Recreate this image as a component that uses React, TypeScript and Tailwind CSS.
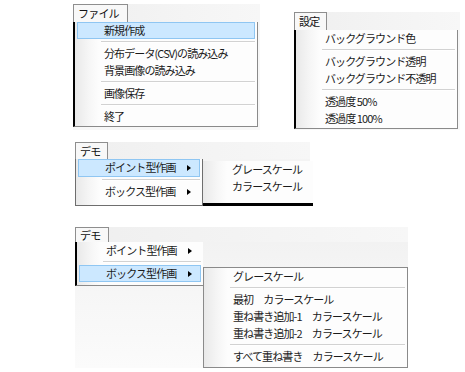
import type { ReactNode } from "react"

const font = { fontFamily: '"Noto Sans CJK JP", "Noto Sans", sans-serif' }

type Entry = { label?: string; sep?: boolean; hot?: boolean; arrow?: boolean }

function Item({ e, h }: { e: Entry; h: string }) {
  if (e.sep) {
    return (
      <div className="h-[6px] flex items-center pl-[26px] pr-[2px]">
        <div className="w-full border-t border-[#d2d2d2] border-b border-b-white" />
      </div>
    )
  }
  return (
    <div className={`${h} px-[2px]`}>
      <div
        className={`h-full flex items-center justify-between pl-[26px] pr-[8px] border ${
          e.hot ? "bg-[#cce8ff] border-[#8fc6f2]" : "border-transparent"
        }`}
      >
        <span className="whitespace-pre text-[11px] tracking-[-0.9px] text-[#1b1b1b] leading-none pb-[1px]">{e.label}</span>
        {e.arrow && <span className="w-0 h-0 border-y-[3.5px] border-y-transparent border-l-[4px] border-l-black" />}
      </div>
    </div>
  )
}

function Menu({ items, cls, h = "h-[17px]" }: { items: Entry[]; cls: string; h?: string }) {
  return (
    <div
      className={`flex flex-col shrink-0 bg-[linear-gradient(to_right,#e9e9e9_0px,#f6f6f6_14px,#fdfdfd_24px,#fdfdfd_100%)] ${cls}`}
    >
      {items.map((e, i) => (
        <Item key={i} e={e} h={h} />
      ))}
    </div>
  )
}

function Bar({ title, tabW, h, children }: { title: string; tabW: string; h: string; children?: ReactNode }) {
  return (
    <div className={`flex ${h} bg-[linear-gradient(to_right,#efefef,#f4f4f4_60%,#f7f7f7)]`}>
      <div
        className={`${tabW} border border-b-0 border-[#8e8e8e] bg-[#f8f8f8] flex items-center pl-[4px] text-[11px] tracking-[-0.8px] text-[#111] leading-none`}
      >
        {title}
      </div>
      {children}
    </div>
  )
}

export default function App() {
  return (
    <div className="w-[465px] h-[372px] bg-white overflow-hidden" style={font}>
      {/* top row: ファイル + 設定 */}
      <div className="flex pt-[4px] pl-[73px]">
        <div className="w-[187px] h-[126px] flex flex-col">
          <Bar title="ファイル" tabW="w-[55px]" h="h-[18px]" />
          <div className="flex flex-1 bg-[#f7f7f7]">
            <Menu
              cls="w-[185px] h-[105px] border-l-2 border-l-black border-r border-b border-[#8a8a8a]"
              items={[
                { label: "新規作成", hot: true },
                { sep: true },
                { label: "分布データ(CSV)の読み込み" },
                { label: "背景画像の読み込み" },
                { sep: true },
                { label: "画像保存" },
                { sep: true },
                { label: "終了" },
              ]}
            />
          </div>
        </div>

        <div className="ml-[34px] mt-[8px] w-[166px] h-[118px] flex flex-col">
          <Bar title="設定" tabW="w-[33px]" h="h-[18px]" />
          <div className="flex flex-1 bg-[#f7f7f7]">
            <Menu
              cls="w-[164px] h-[99px] border-l-2 border-l-black border-r border-b border-[#8a8a8a]"
              items={[
                { label: "バックグラウンド色" },
                { sep: true },
                { label: "バックグラウンド透明" },
                { label: "バックグラウンド不透明" },
                { sep: true },
                { label: "透過度 50%" },
                { label: "透過度 100%" },
              ]}
            />
          </div>
        </div>
      </div>

      {/* デモ: ポイント型作画 */}
      <div className="pl-[75px] mt-[12px]">
        <div className="w-[235px] h-[64px] flex flex-col">
          <Bar title="デモ" tabW="w-[33px]" h="h-[17px]" />
          <div className="flex flex-1 bg-[#f4f4f4]">
            <Menu
              cls="w-[128px] h-[47px] border-l border-[#6e6e6e] border-b border-r"
              h="h-[18px]"
              items={[
                { label: "ポイント型作画", hot: true, arrow: true },
                { sep: true },
                { label: "ボックス型作画", arrow: true },
              ]}
            />
            <div className="flex-1 mt-[2px] h-[45px] border-b-[3px] border-b-black">
              <Menu
                cls="h-full"
                items={[{ label: "グレースケール" }, { label: "カラースケール" }]}
              />
            </div>
          </div>
        </div>
      </div>

      {/* デモ: ボックス型作画 */}
      <div className="pl-[75px] mt-[21px]">
        <div className="w-[333px] h-[141px] flex flex-col">
          <Bar title="デモ" tabW="w-[34px]" h="h-[15px]" />
          <div className="flex flex-1 bg-[linear-gradient(to_bottom,#f2f2f2,#f6f6f6_40%,#fbfbfb)]">
            <div className="w-[128px] shrink-0 flex flex-col">
              <Menu
                cls="h-[44px] border-l-2 border-l-black border-b border-[#8a8a8a]"
                items={[
                  { label: "ポイント型作画", arrow: true },
                  { sep: true },
                  { label: "ボックス型作画", hot: true, arrow: true },
                ]}
              />
            </div>
            <div className="flex-1 pt-[25px]">
              <Menu
                cls="h-[101px] border border-[#8a8a8a]"
                items={[
                  { label: "グレースケール" },
                  { sep: true },
                  { label: "最初　カラースケール" },
                  { label: "重ね書き追加-1　カラースケール" },
                  { label: "重ね書き追加-2　カラースケール" },
                  { sep: true },
                  { label: "すべて重ね書き　カラースケール" },
                ]}
              />
            </div>
          </div>
        </div>
      </div>
    </div>
  )
}
